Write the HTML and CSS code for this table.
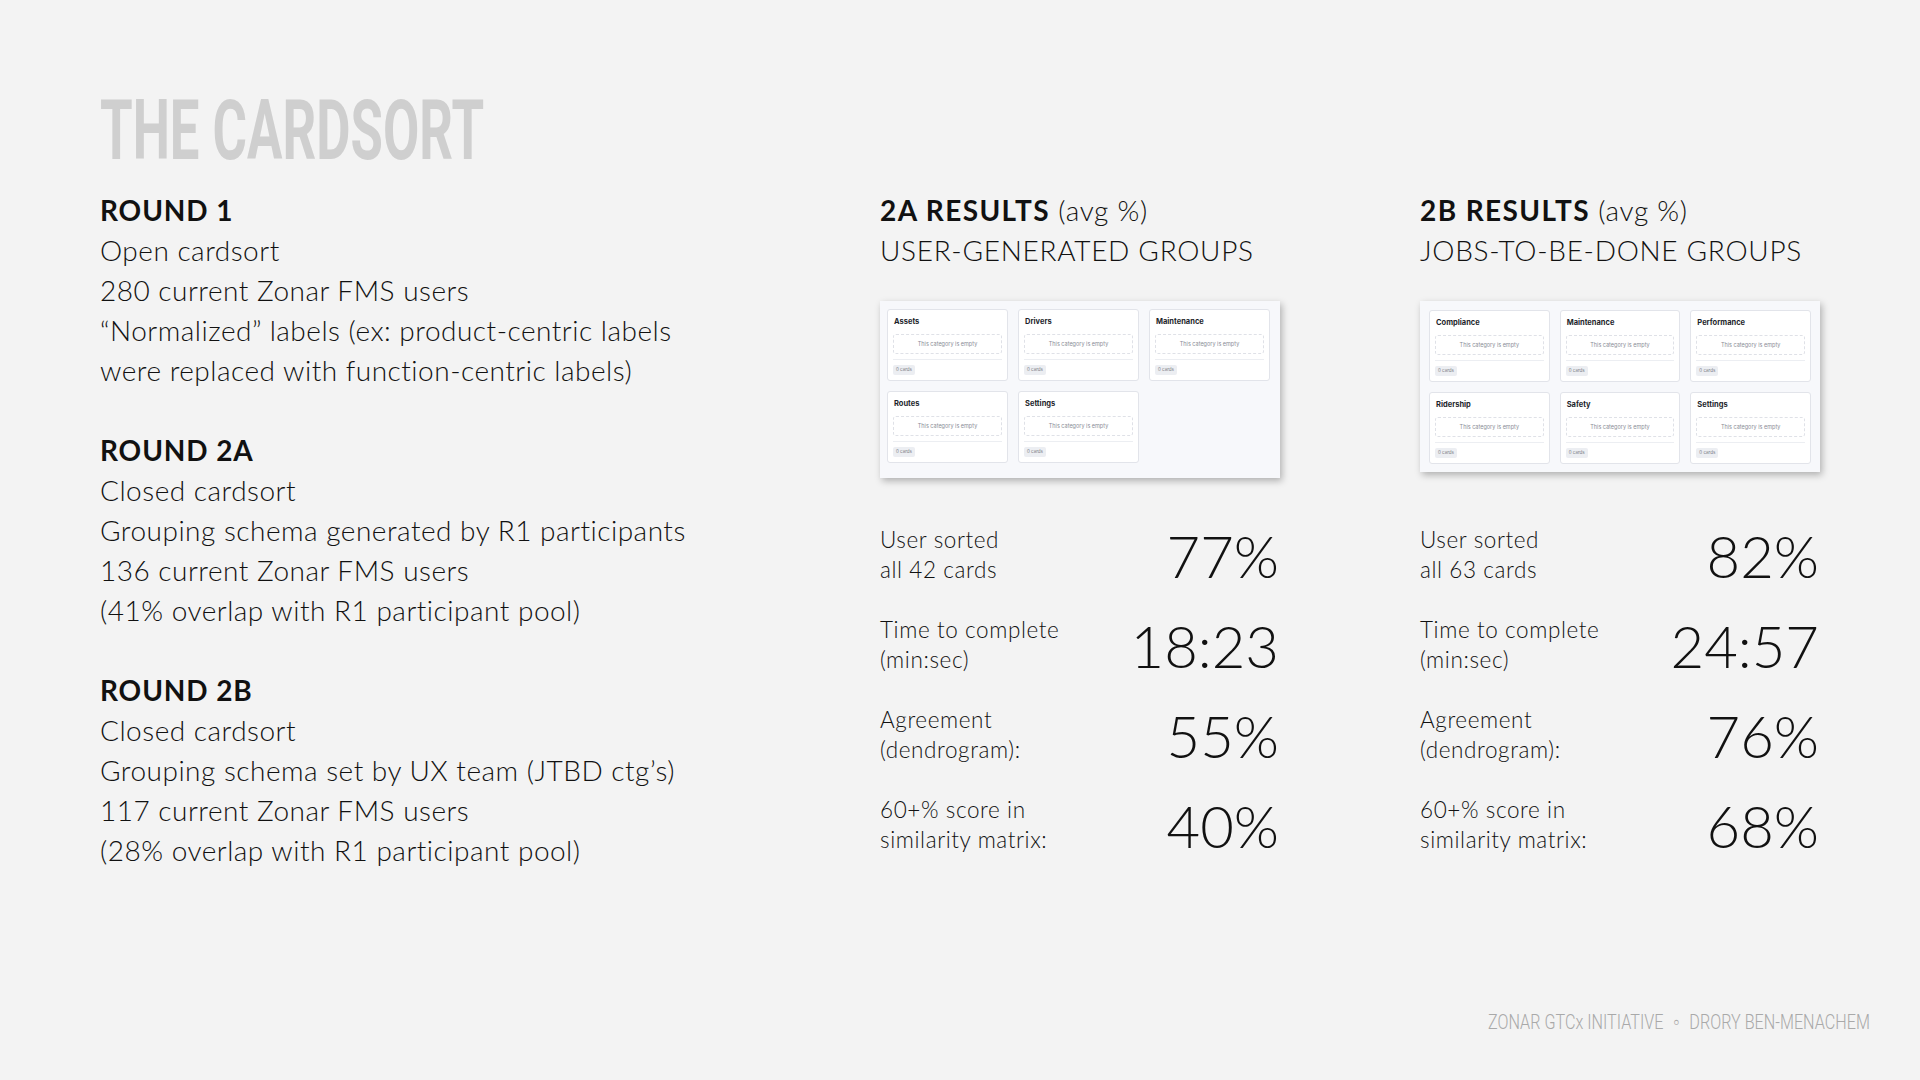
FILE: index.html
```html
<!DOCTYPE html>
<html lang="en">
<head>
<meta charset="utf-8">
<title>The Cardsort</title>
<link rel="stylesheet" href="styles.css">
</head>
<body>
<div class="page">
  <h1 class="title"><span class="title-text">THE CARDSORT</span></h1>
  <main class="content">
    <section class="rounds">
      <div class="round">
        <div class="round-head">ROUND 1</div>
        <div>Open cardsort</div>
        <div>280 current Zonar FMS users</div>
        <div>“Normalized” labels (ex: product-centric labels</div>
        <div>were replaced with function-centric labels)</div>
      </div>
      <div class="round">
        <div class="round-head">ROUND 2A</div>
        <div>Closed cardsort</div>
        <div>Grouping schema generated by R1 participants</div>
        <div>136 current Zonar FMS users</div>
        <div>(41% overlap with R1 participant pool)</div>
      </div>
      <div class="round">
        <div class="round-head">ROUND 2B</div>
        <div>Closed cardsort</div>
        <div>Grouping schema set by UX team (JTBD ctg’s)</div>
        <div>117 current Zonar FMS users</div>
        <div>(28% overlap with R1 participant pool)</div>
      </div>
    </section>

    <section class="result">
      <div class="result-head">
        <div><b>2A RESULTS</b> (avg %)</div>
        <div>USER-GENERATED GROUPS</div>
      </div>
      <div class="shot-wrap">
        <div class="shot shot-a">
          <div class="cat"><div class="cat-name">Assets</div><div class="cat-empty">This category is empty</div><div class="cat-sep"></div><div class="cat-count">0 cards</div></div>
          <div class="cat"><div class="cat-name">Drivers</div><div class="cat-empty">This category is empty</div><div class="cat-sep"></div><div class="cat-count">0 cards</div></div>
          <div class="cat"><div class="cat-name">Maintenance</div><div class="cat-empty">This category is empty</div><div class="cat-sep"></div><div class="cat-count">0 cards</div></div>
          <div class="cat"><div class="cat-name">Routes</div><div class="cat-empty">This category is empty</div><div class="cat-sep"></div><div class="cat-count">0 cards</div></div>
          <div class="cat"><div class="cat-name">Settings</div><div class="cat-empty">This category is empty</div><div class="cat-sep"></div><div class="cat-count">0 cards</div></div>
        </div>
      </div>
      <div class="stats">
        <div class="stat"><div class="stat-label">User sorted<br>all 42 cards</div><div class="stat-value">77%</div></div>
        <div class="stat"><div class="stat-label">Time to complete<br>(min:sec)</div><div class="stat-value">18:23</div></div>
        <div class="stat"><div class="stat-label">Agreement<br>(dendrogram):</div><div class="stat-value">55%</div></div>
        <div class="stat"><div class="stat-label">60+% score in<br>similarity matrix:</div><div class="stat-value">40%</div></div>
      </div>
    </section>

    <section class="result">
      <div class="result-head">
        <div><b>2B RESULTS</b> (avg %)</div>
        <div>JOBS-TO-BE-DONE GROUPS</div>
      </div>
      <div class="shot-wrap">
        <div class="shot shot-b">
          <div class="cat"><div class="cat-name">Compliance</div><div class="cat-empty">This category is empty</div><div class="cat-sep"></div><div class="cat-count">0 cards</div></div>
          <div class="cat"><div class="cat-name">Maintenance</div><div class="cat-empty">This category is empty</div><div class="cat-sep"></div><div class="cat-count">0 cards</div></div>
          <div class="cat"><div class="cat-name">Performance</div><div class="cat-empty">This category is empty</div><div class="cat-sep"></div><div class="cat-count">0 cards</div></div>
          <div class="cat"><div class="cat-name">Ridership</div><div class="cat-empty">This category is empty</div><div class="cat-sep"></div><div class="cat-count">0 cards</div></div>
          <div class="cat"><div class="cat-name">Safety</div><div class="cat-empty">This category is empty</div><div class="cat-sep"></div><div class="cat-count">0 cards</div></div>
          <div class="cat"><div class="cat-name">Settings</div><div class="cat-empty">This category is empty</div><div class="cat-sep"></div><div class="cat-count">0 cards</div></div>
        </div>
      </div>
      <div class="stats">
        <div class="stat"><div class="stat-label">User sorted<br>all 63 cards</div><div class="stat-value">82%</div></div>
        <div class="stat"><div class="stat-label">Time to complete<br>(min:sec)</div><div class="stat-value">24:57</div></div>
        <div class="stat"><div class="stat-label">Agreement<br>(dendrogram):</div><div class="stat-value">76%</div></div>
        <div class="stat"><div class="stat-label">60+% score in<br>similarity matrix:</div><div class="stat-value">68%</div></div>
      </div>
    </section>
  </main>
  <footer class="footer"><span class="footer-text">ZONAR GTCx INITIATIVE &nbsp;∘&nbsp; DRORY BEN-MENACHEM</span></footer>
</div>
</body>
</html>
```

FILE: styles.css
```css
html, body {
  margin: 0;
  padding: 0;
}

body {
  background: #f3f3f3;
  color: #111111;
  font-family: Lato, "Open Sans", sans-serif;
}

.page {
  width: 1920px;
  height: 1080px;
  display: flex;
  flex-direction: column;
  box-sizing: border-box;
  padding: 89px 0 47px 100px;
  overflow: hidden;
}

.title {
  margin: 0;
  height: 83px;
  font-family: Roboto, "DejaVu Sans", sans-serif;
  font-weight: 700;
  font-size: 83px;
  line-height: 83px;
  color: #cfcfcf;
  white-space: nowrap;
}

.title-text {
  display: inline-block;
  transform: scaleX(0.635);
  transform-origin: left center;
}

.content {
  margin-top: 18px;
  display: flex;
  gap: 140px;
}

.rounds {
  width: 640px;
  font-size: 28px;
  line-height: 40px;
  font-weight: 300;
  letter-spacing: 0.5px;
  display: flex;
  flex-direction: column;
  gap: 40px;
}

.round-head {
  font-weight: 700;
  letter-spacing: 0.9px;
}

.result {
  width: 400px;
  display: flex;
  flex-direction: column;
}

.result-head {
  font-size: 28px;
  line-height: 40px;
  font-weight: 300;
  letter-spacing: 0.7px;
  white-space: nowrap;
}

.result-head b {
  font-weight: 700;
  letter-spacing: 1.4px;
}

.shot-wrap {
  margin-top: 31px;
  height: 177px;
}

.shot {
  box-sizing: border-box;
  width: 400px;
  background: #f7f8fb;
  box-shadow: 2px 3px 7px rgba(0, 0, 0, 0.28);
  display: grid;
  grid-template-columns: repeat(3, 1fr);
  column-gap: 10px;
  row-gap: 10px;
  align-content: start;
  font-family: Inter, Roboto, sans-serif;
}

.shot-a {
  height: 177px;
  padding: 8px 10px 0 7px;
}

.shot-b {
  height: 171px;
  padding: 9px 9px 0 9px;
}

.cat {
  box-sizing: border-box;
  height: 72px;
  background: #ffffff;
  border: 1px solid #e2e4ea;
  border-radius: 3px;
  padding: 5px 5px 0 5px;
  display: flex;
  flex-direction: column;
}

.cat-name {
  height: 14px;
  line-height: 14px;
  font-size: 7.5px;
  font-weight: 700;
  color: #1d1f2b;
  padding-left: 1px;
  white-space: nowrap;
}

.cat-empty {
  margin-top: 5px;
  height: 20px;
  box-sizing: border-box;
  border: 1px dashed #dfe1e7;
  border-radius: 3px;
  font-size: 5.5px;
  line-height: 18px;
  text-align: center;
  color: #8a8d96;
  white-space: nowrap;
}

.cat-sep {
  margin-top: 5px;
  height: 1px;
  background: #eceef2;
}

.cat-count {
  margin-top: 5px;
  align-self: flex-start;
  height: 10px;
  line-height: 10px;
  padding: 0 3px;
  border-radius: 2px;
  background: #eceef2;
  color: #777a84;
  font-size: 4.5px;
  white-space: nowrap;
}

.stats {
  margin-top: 47px;
  display: flex;
  flex-direction: column;
  gap: 30px;
  padding-right: 1px;
}

.stat {
  display: flex;
  justify-content: space-between;
  align-items: flex-end;
  height: 60px;
}

.stat-label {
  font-size: 22.5px;
  line-height: 30px;
  font-weight: 300;
  letter-spacing: 0.6px;
  color: #111111;
  white-space: nowrap;
}

.stat-value {
  font-size: 58px;
  line-height: 58px;
  font-weight: 300;
  color: #111111;
  white-space: nowrap;
}

.footer {
  margin-top: auto;
  padding-right: 50px;
  text-align: right;
  font-family: Roboto, "DejaVu Sans", sans-serif;
  font-weight: 300;
  font-size: 21px;
  line-height: 21px;
  color: #a9a9a9;
  white-space: nowrap;
}

.footer-text {
  display: inline-block;
  transform: scaleX(0.77);
  transform-origin: right center;
}
```
